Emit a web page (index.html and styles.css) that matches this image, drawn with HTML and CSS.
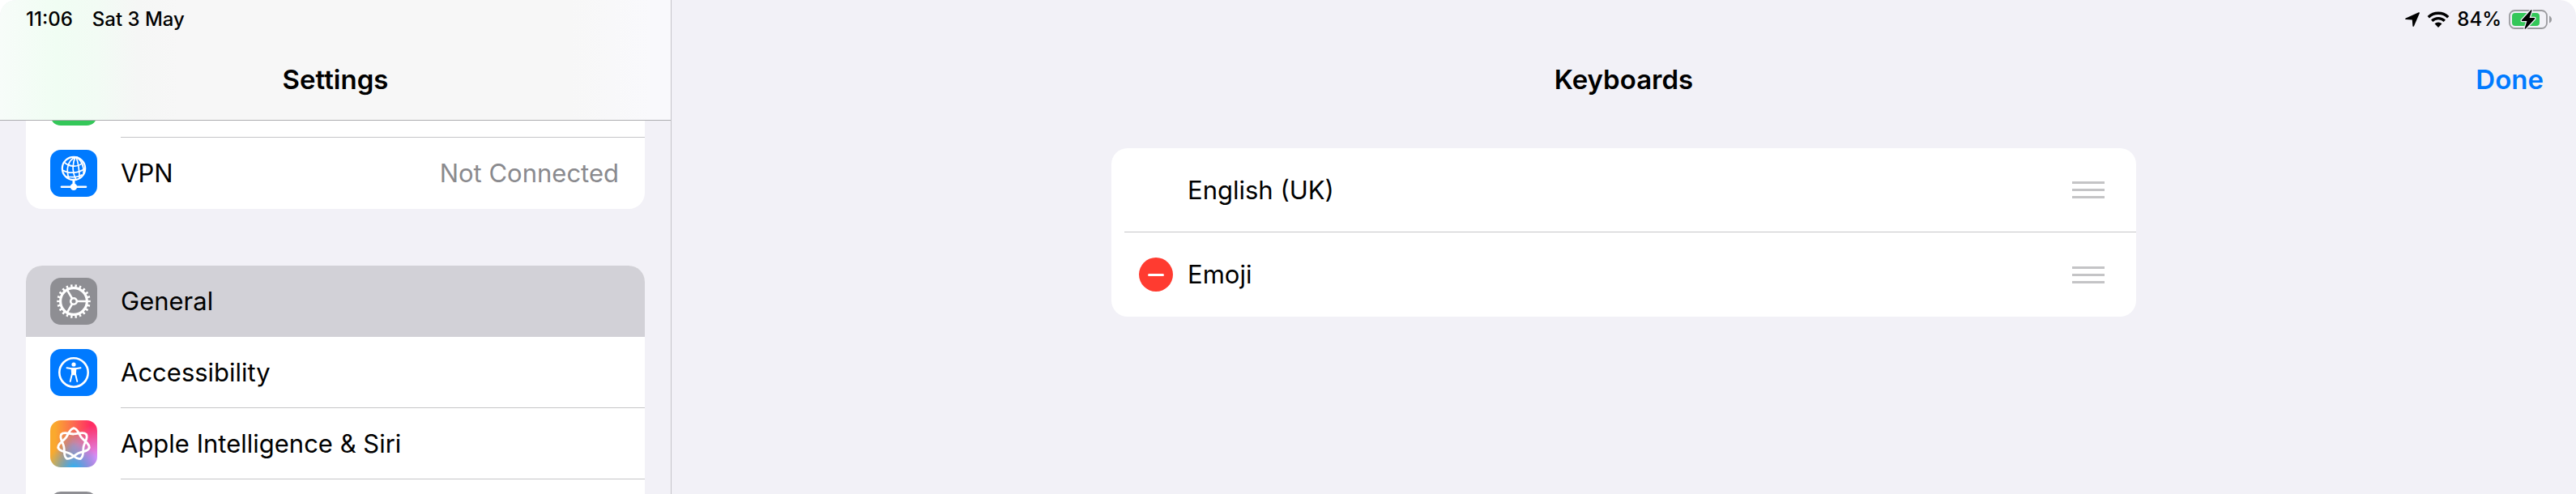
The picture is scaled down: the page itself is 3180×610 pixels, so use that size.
FILE: index.html
```html
<!DOCTYPE html>
<html lang="en-GB">
<head>
    <meta charset="utf-8">
    <meta name="viewport" content="width=device-width, initial-scale=1">
    <title>Keyboards</title>
    <link rel="stylesheet" href="styles.css">
</head>
<body>
    <div class="screen">
        <aside class="sidebar">
            <header class="sidebar-header">
                <div class="status">
                    <time>11:06</time>
                    <span>Sat 3 May</span>
                </div>
                <h1 class="title">Settings</h1>
            </header>
            <nav class="sidebar-list">
                <ul class="group">
                    <li><a class="row" href="#"><span class="icon green"></span><span class="row-body"></span></a></li>
                    <li>
                        <a class="row" href="#">
                            <svg class="icon blue" viewBox="0 0 58 58" fill="none" stroke="#fff" stroke-width="2" stroke-linecap="round">
                                <circle cx="29" cy="23" r="14.2" stroke-width="2.2"/>
                                <path d="M31 9C22 13 19 24 23 35M31 9C28 15 26 26 32 37M32 9C35 17 36 22 36 35M33 9C40 15 42 21 41 29" stroke-width="1.7"/>
                                <path d="M18 16C24 21 34 22 40 16M15 25C23 30 35 29 43 23M20 33C26 34 34 34 39 31" stroke-width="1.7"/>
                                <path d="M29 37v7" stroke-width="3"/>
                                <path d="M14 45.7h30" stroke-width="2.6"/>
                                <circle cx="29" cy="45.7" r="4.2" fill="#fff" stroke="none"/>
                            </svg>
                            <span class="row-body"><span>VPN</span><span class="value">Not Connected</span></span>
                        </a>
                    </li>
                </ul>
                <ul class="group">
                    <li>
                        <a class="row selected" href="#">
                            <svg class="icon grey" viewBox="0 0 58 58" fill="none" stroke="#fff">
                                <circle cx="29" cy="29" r="16.4" stroke-width="3.2"/>
                                <circle cx="29" cy="29" r="19" stroke-width="3.6" pathLength="22" stroke-dasharray=".44 .56" stroke-dashoffset=".22"/>
                                <circle cx="29" cy="29" r="3.8" stroke-width="2.6"/>
                                <path d="M33 29h13M27 25.5l-6.7 -11.5M27 32.5l-6.7 11.5" stroke-width="2.5"/>
                            </svg>
                            <span class="row-body">General</span>
                        </a>
                    </li>
                    <li>
                        <a class="row" href="#">
                            <svg class="icon blue" viewBox="0 0 58 58" fill="none" stroke="#fff" stroke-linecap="round" stroke-linejoin="round">
                                <circle cx="29" cy="29" r="17.7" stroke-width="2.6"/>
                                <circle cx="29" cy="19" r="2.6" fill="#fff" stroke="none"/>
                                <path d="M20.5 23.3L26.5 24.3H31.5L37.5 23.3" stroke-width="1.9"/>
                                <path d="M26.6 24.2H31.4L31 30.5L33.3 40M26.6 24.2L27 30.5L24.7 40" stroke-width="1.9"/>
                                <path d="M26.6 24.2h4.8l-.3 8h-4.2z" fill="#fff" stroke="none"/>
                            </svg>
                            <span class="row-body">Accessibility</span>
                        </a>
                    </li>
                    <li>
                        <a class="row" href="#">
                            <svg class="icon siri" viewBox="0 0 58 58" fill="none" stroke="#fff" stroke-width="2.8" stroke-linecap="round">
                                <defs>
                                    <path id="petal" d="M0 -19.6C5 -19.6 6 -12.5 9.8 -7.8C13.4 -3.4 20.1 -.5 19.1 4.4"/>
                                </defs>
                                <g transform="translate(29 29.5)">
                                    <use href="#petal"/>
                                    <use href="#petal" transform="rotate(51.43)"/>
                                    <use href="#petal" transform="rotate(102.86)"/>
                                    <use href="#petal" transform="rotate(154.29)"/>
                                    <use href="#petal" transform="rotate(205.71)"/>
                                    <use href="#petal" transform="rotate(257.14)"/>
                                    <use href="#petal" transform="rotate(308.57)"/>
                                </g>
                            </svg>
                            <span class="row-body">Apple Intelligence &amp; Siri</span>
                        </a>
                    </li>
                    <li><a class="row" href="#"><span class="icon grey"></span><span class="row-body"></span></a></li>
                </ul>
            </nav>
        </aside>

        <main class="detail">
            <div class="status status-right">
                <svg class="location" viewBox="0 0 18 18"><path d="M16.8 .3Q18.3 -.1 17.8 1.4L11 17.2Q10 18.8 9.4 17.2L8.8 9.4L1 9Q-.8 8.4 .8 7.4Z"/></svg>
                <svg class="wifi" viewBox="0 0 28 20">
                    <path d="M1.8 7.2A17.5 17.5 0 0 1 26.2 7.2M6.2 11.8A11.2 11.2 0 0 1 21.8 11.8" fill="none" stroke="#000" stroke-width="3.4"/>
                    <path d="M9.5 15.3A6.5 6.5 0 0 1 18.5 15.3L14.5 19.4Q14 20 13.5 19.4Z"/>
                </svg>
                <span class="percent">84%</span>
                <svg class="battery" viewBox="0 0 54 26">
                    <rect x="1" y="2" width="46" height="22" rx="6.5" fill="none" stroke="#9b9b9f" stroke-width="1.8"/>
                    <rect x="4" y="5" width="34" height="16" rx="4" fill="#34c759"/>
                    <path d="M50 8.5Q53 10 53 13T50 17.5Z" fill="#9b9b9f"/>
                    <path d="M27.5 1.3L16 13.8Q15.4 15 16.6 15H22.4L19.6 24.3Q20 25.2 20.8 24.6L32.2 12.2Q32.6 11 31.6 11H25.6L28.6 1.8Q28.3 .8 27.5 1.3Z" stroke="#f2f1f7" stroke-width="2.6" paint-order="stroke"/>
                </svg>
            </div>
            <header class="navbar">
                <h2 class="title">Keyboards</h2>
                <button class="done" type="button">Done</button>
            </header>
            <ul class="keyboards">
                <li class="keyboard">
                    <span class="name">English (UK)</span>
                    <span class="handle"></span>
                </li>
                <li class="keyboard">
                    <button class="remove" type="button" aria-label="Remove Emoji"></button>
                    <span class="name">Emoji</span>
                    <span class="handle"></span>
                </li>
            </ul>
        </main>
    </div>
</body>
</html>
```

FILE: styles.css
```css
* { margin: 0; padding: 0; box-sizing: border-box; }
body { font-family: Inter, "Liberation Sans", sans-serif; font-size: 31px; line-height: 40px; color: #000; background: #fff; }
ul { list-style: none; }
a { color: inherit; text-decoration: none; }
button { font: inherit; border: none; background: none; cursor: pointer; }

.screen { display: flex; height: 100vh; overflow: hidden; background: #f2f1f7; border-radius: 20px 20px 0 0; }
.status { display: flex; align-items: center; gap: 24px; height: 48px; padding: 0 32px; font-size: 24px; font-weight: 500; line-height: 28px; }
.title { font-size: 33px; font-weight: 600; line-height: 40px; text-align: center; }

/* sidebar */
.sidebar { position: relative; flex: 0 0 829px; border-right: 1px solid #c6c5ca; }
.sidebar-header { position: absolute; top: 0; left: 0; right: 0; height: 149px; border-bottom: 1px solid #adadb1; background: linear-gradient(90deg, #f7fcf9 0, #f0fdf3 70px, #f2fbf4 120px, #f5f6f5 170px, #f7f7f7 220px, #f7f7f7 85%, #f9f9fc 97%); }
.sidebar-header .title { padding: 30px 0; }
.sidebar-list { display: flex; flex-direction: column; gap: 70px; padding: 82px 32px 0; }
.group { background: #fff; border-radius: 20px; overflow: hidden; }
.row { display: flex; align-items: center; gap: 29px; height: 88px; padding-left: 30px; }
.row-body { flex: 1; display: flex; align-items: center; justify-content: space-between; height: 88px; padding-right: 32px; border-bottom: 1px solid #c6c6c8; }
li:last-child .row-body, .selected .row-body { border-bottom: none; }
.selected { background: #d2d1d7; }
.value { color: #8a8a8e; }
.icon { flex: none; width: 58px; height: 58px; border-radius: 13px; }
.green { background: #34c759; }
.blue { background: #007aff; }
.grey { background: #8e8e93; }
.siri { background: radial-gradient(circle at 50% 105%, #22b4fb 0, rgba(34,180,251,0) 50%), radial-gradient(circle at 100% 80%, #d892ff 0, rgba(216,146,255,0) 55%), radial-gradient(circle at 50% 55%, #b08ba0 0, rgba(176,139,160,0) 50%), linear-gradient(90deg, #faa92e 10%, #fc6a50 50%, #ff2d62 85%); }

/* detail */
.detail { flex: 1; }
.status-right { justify-content: flex-end; gap: 9px; padding-right: 29px; }
.location { width: 18px; height: 18px; }
.wifi { width: 28px; height: 20px; }
.battery { width: 54px; height: 26px; }
.navbar { display: grid; grid-template-columns: 1fr auto 1fr; align-items: center; height: 100px; padding: 0 40px; }
.navbar .title { grid-column: 2; }
.done { justify-self: end; color: #007aff; font-size: 33px; font-weight: 600; }
.keyboards { max-width: 1265px; margin: 35px auto 0; background: #fff; border-radius: 20px; }
.keyboard { display: grid; grid-template-columns: 42px 1fr auto; align-items: center; column-gap: 18px; height: 104px; margin-left: 16px; padding: 0 39px 0 18px; }
.keyboard:first-child { border-bottom: 1px solid #c6c6c8; }
.name { grid-column: 2; }
.remove { display: flex; align-items: center; justify-content: center; width: 42px; height: 42px; border-radius: 50%; background: #ff3b30; }
.remove::before { content: ""; width: 20px; height: 3px; border-radius: 2px; background: #fff; }
.handle { width: 40px; height: 21px; border-top: 3px solid #c4c4c6; border-bottom: 3px solid #c4c4c6; background: linear-gradient(#c4c4c6, #c4c4c6) center / 100% 3px no-repeat; }
```
